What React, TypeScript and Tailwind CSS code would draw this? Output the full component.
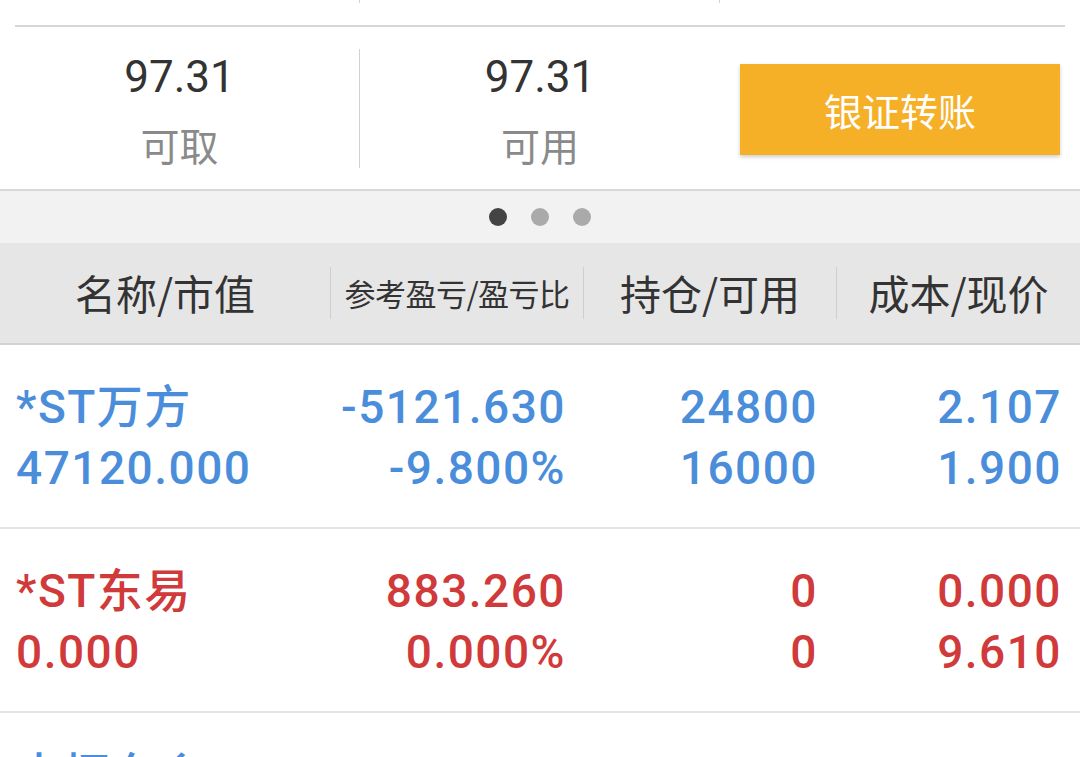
import React from "react";

type Row = {
  name: string;
  value: string;
  pnl: string;
  ratio: string;
  hold: string;
  avail: string;
  cost: string;
  price: string;
  up: boolean;
};

const rows: Row[] = [
  { name: "*ST万方", value: "47120.000", pnl: "-5121.630", ratio: "-9.800%", hold: "24800", avail: "16000", cost: "2.107", price: "1.900", up: false },
  { name: "*ST东易", value: "0.000", pnl: "883.260", ratio: "0.000%", hold: "0", avail: "0", cost: "0.000", price: "9.610", up: true },
  { name: "大恒东乡", value: "8660.000", pnl: "-4.880", ratio: "-0.056%", hold: "900", avail: "900", cost: "10.110", price: "9.622", up: false },
];

const cjk = "font-['Noto_Sans_CJK_SC',sans-serif]";
const num = "font-['Roboto','Noto_Sans_CJK_SC',sans-serif]";

function StockRow({ r }: { r: Row }) {
  const color = r.up ? "text-[#d03a3a]" : "text-[#4a8edb]";
  return (
    <div className={`flex h-[184px] flex-col justify-center border-b-2 border-[#e4e4e4] pt-[4px] ${num} ${color} text-[46px] font-medium leading-[61px] tracking-[1.5px]`}>
      <div className="flex">
        <div className="w-[330px] pl-[16px]">{r.name}</div>
        <div className="w-[253px] pr-[17px] text-right">{r.pnl}</div>
        <div className="w-[253px] pr-[18px] text-right">{r.hold}</div>
        <div className="flex-1 pr-[18px] text-right">{r.cost}</div>
      </div>
      <div className="flex">
        <div className="w-[330px] pl-[16px]">{r.value}</div>
        <div className="w-[253px] pr-[17px] text-right">{r.ratio}</div>
        <div className="w-[253px] pr-[18px] text-right">{r.avail}</div>
        <div className="flex-1 pr-[18px] text-right">{r.price}</div>
      </div>
    </div>
  );
}

export default function App() {
  return (
    <div className="h-[757px] w-[1080px] overflow-hidden bg-white">
      {/* row cut off above */}
      <div className="flex h-[25px] overflow-hidden">
        {["总资产", "总市值", ""].map((t, i) => (
          <div
            key={i}
            className={`-mt-[100px] flex h-[103px] w-[360px] flex-col items-center justify-end ${i < 2 ? "border-r border-[#d2d2d2]" : ""}`}
          >
            <span className={`${cjk} mb-[6px] text-[38px] leading-[40px] text-[#9a9a9a]`}>{t}</span>
          </div>
        ))}
      </div>
      <div className="mx-[15px] h-[2px] bg-[#d6d6d6]" />

      {/* balance */}
      <div className="flex h-[164px] border-b-2 border-[#d8d8d8]">
        <div className="flex w-[359px] flex-col items-center pt-[24px]">
          <div className={`${num} text-[44px] leading-[52px] text-[#333]`}>97.31</div>
          <div className={`${cjk} mt-[15px] text-[39px] leading-[52px] text-[#8a8a8a]`}>可取</div>
        </div>
        <div className="mt-[22px] h-[119px] w-px bg-[#d0d0d0]" />
        <div className="flex w-[360px] flex-col items-center pt-[24px]">
          <div className={`${num} text-[44px] leading-[52px] text-[#333]`}>97.31</div>
          <div className={`${cjk} mt-[15px] text-[39px] leading-[52px] text-[#8a8a8a]`}>可用</div>
        </div>
        <div className="flex-1 pt-[37px] pl-[20px]">
          <button className={`${cjk} h-[91px] w-[320px] bg-[#f5b028] text-[38px] text-white shadow-[0_2px_4px_rgba(0,0,0,0.2)]`}>
            银证转账
          </button>
        </div>
      </div>

      {/* pager dots */}
      <div className="flex h-[52px] items-center justify-center gap-[24px] bg-[#f2f2f2]">
        <span className="h-[18px] w-[18px] rounded-full bg-[#444]" />
        <span className="h-[18px] w-[18px] rounded-full bg-[#aaa]" />
        <span className="h-[18px] w-[18px] rounded-full bg-[#aaa]" />
      </div>

      {/* table header */}
      <div className={`flex h-[102px] items-center border-b-2 border-[#d2d2d2] bg-[#e6e6e6] ${cjk} text-[#333]`}>
        <div className="w-[330px] text-center text-[41px]">名称/市值</div>
        <div className="h-[52px] w-px bg-[#cfcfcf]" />
        <div className="w-[252px] text-center text-[31px] tracking-[-0.5px]">参考盈亏/盈亏比</div>
        <div className="h-[52px] w-px bg-[#cfcfcf]" />
        <div className="w-[252px] text-center text-[41px]">持仓/可用</div>
        <div className="h-[52px] w-px bg-[#cfcfcf]" />
        <div className="flex-1 text-center text-[41px]">成本/现价</div>
      </div>

      {rows.map((r) => (
        <StockRow key={r.name} r={r} />
      ))}
    </div>
  );
}
